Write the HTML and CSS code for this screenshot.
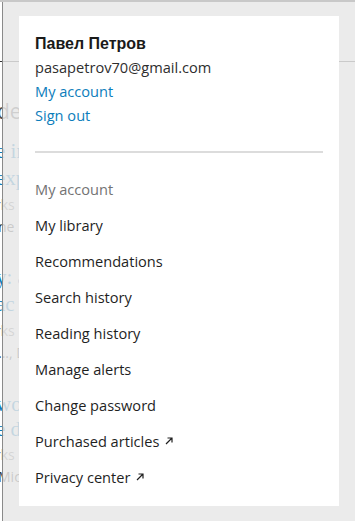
FILE: index.html
```html
<!DOCTYPE html>
<html lang="en">
<head>
<meta charset="utf-8">
<title>Account menu</title>
<link rel="stylesheet" href="styles.css">
</head>
<body>
<div class="page">
  <div class="topbar"></div>
  <header class="header"></header>
  <main class="results">
    <p class="heading">dec</p>
    <section class="result">
      <p class="title">e in</p>
      <p class="title">exp</p>
      <p class="meta">rks</p>
      <p class="authors">ne</p>
    </section>
    <section class="result r2">
      <p class="title">y: a</p>
      <p class="title">ac</p>
      <p class="meta">rks</p>
      <p class="authors">..., D</p>
    </section>
    <section class="result r3">
      <p class="title">wor</p>
      <p class="title">e di</p>
      <p class="meta">rks</p>
      <p class="authors">Mich</p>
    </section>
  </main>
</div>
<div class="overlay"></div>
<nav class="account-menu">
  <div class="user">
    <p class="user-name">Павел Петров</p>
    <p class="user-email">pasapetrov70@gmail.com</p>
    <a class="user-link" href="#">My account</a>
    <a class="user-link" href="#">Sign out</a>
  </div>
  <hr class="divider">
  <ul class="menu">
    <li class="menu-item muted">My account</li>
    <li class="menu-item">My library</li>
    <li class="menu-item">Recommendations</li>
    <li class="menu-item">Search history</li>
    <li class="menu-item">Reading history</li>
    <li class="menu-item">Manage alerts</li>
    <li class="menu-item">Change password</li>
    <li class="menu-item">Purchased articles <svg class="ext" width="8" height="8" viewBox="0 0 8 8"><path d="M1 7L7 1M2.5 1H7V5.5" fill="none" stroke="#1f1f1f" stroke-width="1.2"/></svg></li>
    <li class="menu-item">Privacy center <svg class="ext" width="8" height="8" viewBox="0 0 8 8"><path d="M1 7L7 1M2.5 1H7V5.5" fill="none" stroke="#1f1f1f" stroke-width="1.2"/></svg></li>
  </ul>
</nav>
</body>
</html>
```
FILE: styles.css
```css
* { box-sizing: border-box; }
html, body { margin: 0; padding: 0; }
body {
  width: 355px;
  height: 521px;
  overflow: hidden;
  background: #fff;
  font-family: "Open Sans", sans-serif;
  position: relative;
}
p { margin: 0; }

.page { width: 355px; }
.topbar { height: 2px; background: #c8c8c8; position: relative; z-index: 3; }
.header { height: 60px; border-bottom: 1px solid #333; }

.results {
  padding-top: 35px;
  width: 19px;
  overflow: hidden;
}
.heading {
  font-family: "Open Sans", sans-serif;
  font-size: 21px;
  line-height: 28px;
  color: #505050;
  text-indent: -3px;
  white-space: nowrap;
}
.result { margin-top: 13px; white-space: nowrap; }
.result.r2 { margin-top: 26px; }
.result.r3 { margin-top: 28px; }
.result.r3 .title { line-height: 25px; }
.title {
  font-family: "Liberation Serif", serif;
  font-size: 21px;
  line-height: 27px;
  color: #0c7dbb;
  text-indent: -4px;
}
.meta {
  font-family: "Open Sans", sans-serif;
  font-size: 14px;
  line-height: 22px;
  margin-top: 2px;
  color: #777;
  text-indent: -5px;
}
.authors {
  font-family: "Open Sans", sans-serif;
  font-size: 14px;
  line-height: 22px;
  color: #333;
  text-indent: -2px;
}

.overlay {
  position: absolute;
  left: 2px;
  top: 2px;
  right: 0;
  bottom: 0;
  background: rgba(231, 231, 231, 0.84);
  border-left: 1px solid #8a8a8a;
  z-index: 2;
}

.account-menu {
  position: absolute;
  left: 19px;
  top: 16px;
  width: 320px;
  height: 490px;
  background: #fff;
  padding: 16px 16px 10px;
  z-index: 4;
}
.user { display: flex; flex-direction: column; }
.user-name {
  font-family: "Liberation Sans", sans-serif;
  font-weight: bold;
  font-size: 16px;
  line-height: 24px;
  color: #1a1a1a;
}
.user-email, .user-link {
  font-size: 14.6px;
  line-height: 24px;
}
.user-email { color: #2e2e2e; margin-top: -1px; }
.user-link { color: #0c7dbb; text-decoration: none; }

.divider {
  margin: 24px 0 18px;
  border: 0;
  height: 2px;
  background: #dcdcdc;
}
.menu { list-style: none; margin: 0; padding: 0; }
.menu-item {
  height: 36px;
  display: flex;
  align-items: center;
  gap: 6px;
  font-size: 14.6px;
  color: #1f1f1f;
}
.menu-item.muted { color: #737373; }
.ext { flex: none; }
```
